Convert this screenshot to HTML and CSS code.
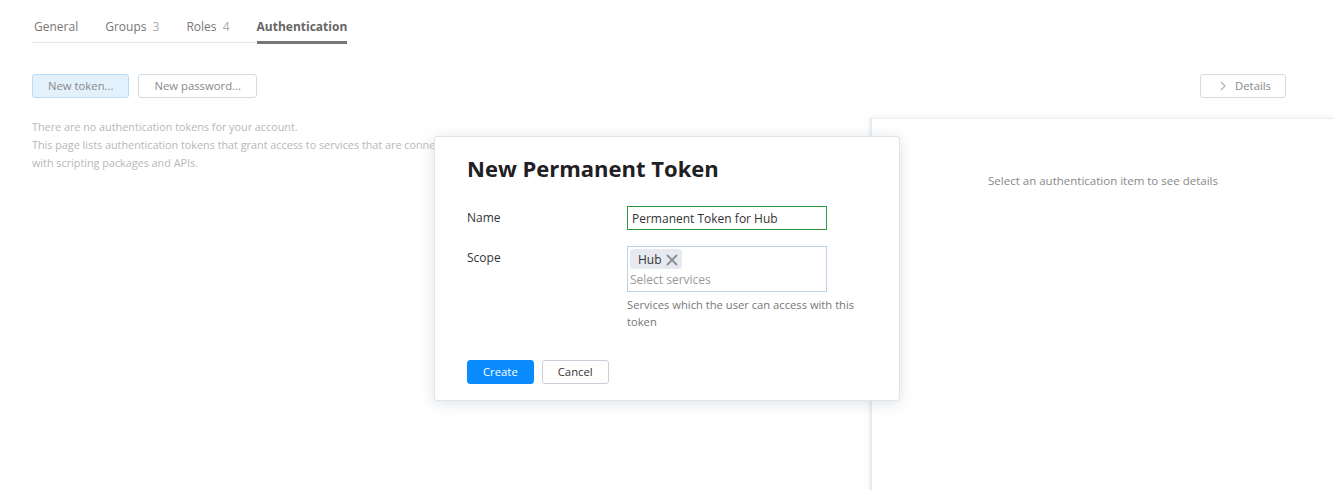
FILE: index.html
```html
<!DOCTYPE html>
<html>
<head>
<meta charset="utf-8">
<link rel="stylesheet" href="styles.css">
</head>
<body>
<div class="top">
  <nav class="tabs">
    <span class="tab">General</span>
    <span class="tab">Groups <span class="count">3</span></span>
    <span class="tab">Roles <span class="count">4</span></span>
    <span class="tab active">Authentication</span>
  </nav>
  <div class="toolbar">
    <div class="actions">
      <button class="btn btn-selected">New token...</button>
      <button class="btn">New password...</button>
    </div>
    <button class="btn btn-details"><svg class="chev" width="8" height="10" viewBox="0 0 8 10"><path d="M2 1 L6 5 L2 9" fill="none" stroke="#b0b0b0" stroke-width="1.2"/></svg>Details</button>
  </div>
</div>
<div class="content">
  <div class="list">
    <p>There are no authentication tokens for your account.</p>
    <p>This page lists authentication tokens that grant access to services that are connected to Hub. Tokens can be used<br>with scripting packages and APIs.</p>
  </div>
  <aside class="details">
    <p>Select an authentication item to see details</p>
  </aside>
</div>

<div class="dialog">
  <h1>New Permanent Token</h1>
  <div class="form">
    <label class="label">Name</label>
    <div class="field"><input class="input" type="text" value="Permanent Token for Hub"></div>
    <label class="label">Scope</label>
    <div class="field">
      <div class="multi">
        <span class="chip">Hub<svg class="x" width="12" height="12" viewBox="0 0 12 12"><path d="M1 1 L11 11 M11 1 L1 11" stroke="#8a8f96" stroke-width="1.8"/></svg></span>
        <span class="placeholder">Select services</span>
      </div>
      <div class="help">Services which the user can access with this token</div>
    </div>
  </div>
  <div class="footer">
    <button class="btn btn-primary">Create</button>
    <button class="btn btn-cancel">Cancel</button>
  </div>
</div>
</body>
</html>
```
FILE: styles.css
```css
html, body {
  margin: 0;
  padding: 0;
  background: #fff;
  font-family: "Open Sans", "Noto Sans", sans-serif;
  color: #333;
  height: 100%;
  overflow: hidden;
}
.top {
  padding: 14px 48px 0 32px;
}
.tabs {
  display: inline-flex;
  gap: 27px;
  border-bottom: 1px solid #e8e8e8;
  padding-left: 2px;
  font-size: 12px;
}
.tab {
  color: #777;
  padding: 3px 0 6px;
  line-height: 18px;
}
.count {
  color: #aaa;
  margin-left: 3px;
}
.tab.active {
  color: #666;
  font-weight: 700;
  border-bottom: 3px solid #777;
  margin-bottom: -2px;
  padding-bottom: 5px;
}
.toolbar {
  display: flex;
  justify-content: space-between;
  margin-top: 31px;
}
.actions {
  display: flex;
  gap: 9px;
}
.btn {
  font-family: inherit;
  font-size: 11.3px;
  height: 24px;
  padding: 0 15px;
  border: 1px solid #d4dbe3;
  border-radius: 3px;
  background: #fff;
  color: #888;
  line-height: 22px;
}
.btn-selected {
  background: #e3f1fd;
  border-color: #b8dcf8;
  color: #888;
}
.btn-details {
  display: flex;
  align-items: center;
  gap: 8px;
  padding: 0 14px 0 18px;
  color: #888;
}
.content {
  display: flex;
  margin-top: 20px;
  height: 380px;
}
.list {
  flex: 1;
  padding: 0 40px 0 32px;
  font-size: 10.8px;
  line-height: 18px;
  color: #b8b8b8;
  white-space: nowrap;
  overflow: hidden;
}
.list p {
  margin: 0;
}
.details {
  flex: 0 0 462px;
  border-left: 2px solid #e8ebf0;
  border-top: 1px solid #edf0f3;
  box-shadow: -1px -1px 4px rgba(200, 205, 215, 0.3);
  text-align: center;
  font-size: 11.5px;
  color: #888;
}
.details p {
  margin: 54px 0 0;
}
.dialog {
  position: absolute;
  left: 434px;
  top: 136px;
  width: 466px;
  height: 265px;
  box-sizing: border-box;
  background: #fff;
  border: 1px solid #dfe3ea;
  border-radius: 3px;
  box-shadow: 0 2px 14px rgba(180, 188, 200, 0.45);
  padding: 14px 32px 0 32px;
}
.dialog h1 {
  margin: 0;
  font-size: 22px;
  line-height: 34px;
  font-weight: 700;
  color: #1f2024;
}
.form {
  display: grid;
  grid-template-columns: 160px 240px;
  row-gap: 16px;
  margin-top: 21px;
  font-size: 12px;
  color: #333;
}
.label {
  line-height: 24px;
}
.input {
  box-sizing: border-box;
  width: 200px;
  height: 24px;
  border: 1px solid #2e9a3f;
  font-family: inherit;
  font-size: 12px;
  color: #333;
  padding: 0 4px;
  outline: none;
}
.multi {
  box-sizing: border-box;
  width: 200px;
  height: 46px;
  border: 1px solid #bcd2e6;
  padding: 2px 2px 0;
  display: flex;
  flex-direction: column;
  align-items: flex-start;
}
.chip {
  display: inline-flex;
  align-items: center;
  gap: 4px;
  background: #e6eaf0;
  border-radius: 3px;
  padding: 1px 4px 0 8px;
  height: 19px;
  font-size: 12px;
  color: #333;
}
.placeholder {
  color: #999;
  line-height: 20px;
  margin-top: 1px;
}
.help {
  margin-top: 4px;
  font-size: 11.2px;
  line-height: 17px;
  color: #777;
}
.footer {
  display: flex;
  gap: 8px;
  margin-top: 30px;
}
.btn-primary {
  background: #0a8cff;
  border-color: #0a8cff;
  color: #fff;
  padding: 0 15px;
}
.btn-cancel {
  border-color: #c8cfd8;
  color: #333;
  padding: 0 15px;
}
```
